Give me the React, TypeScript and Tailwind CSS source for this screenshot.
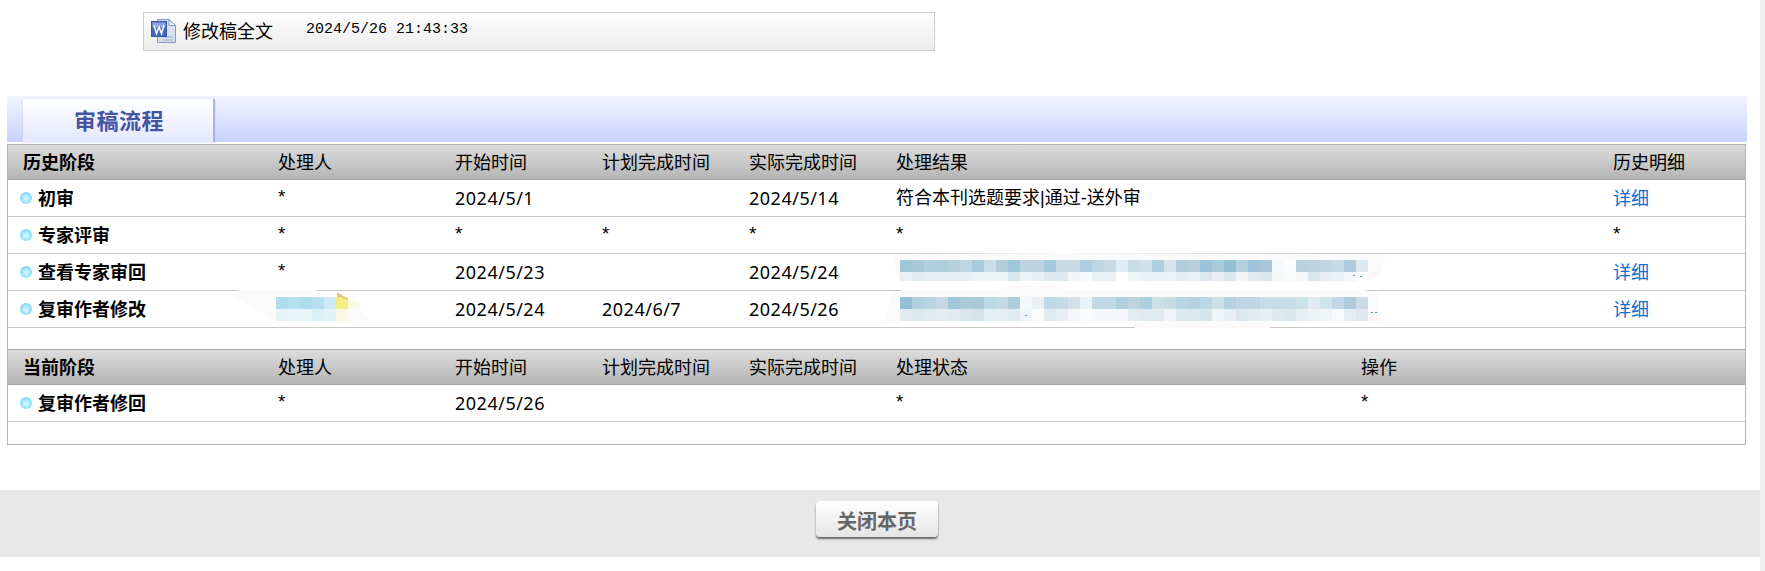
import React from "react";

const r1a = "9fc6d9 a9c9d8 b1cfe0 aecede b6d0dd bdd6e2 a9cadb c9dee8 b2cedb a0c6d9 bcd4e1 bcd4e1 a5cadd c8dbe5 c8dbe5 accee0 bed5e2 c9dae4 dfecf3 c8dde6 d0e1ea b1d0df d5e4ec b0cedc b8cfdc 9cc4d9 a8cbdb 95bfd2 b2d0e0 a0c4d9 a7c6d8 f3f9fc fafcfd b9d2df bdd4e0 bfd6e3 c5dbe5 aecbdb dfeaf0".split(" ");
const r1b = "e8f1f5 dfebf1 e4eef3 e4eef3 e6eff4 e6eff4 eef4f6 eef4f6 ecf3f6 d8e6ee ecf3f7 e8f0f4 dfeaf0 deeaf1 f1f7f9 f6fafb e9f1f5 e9f1f5 ffffff f0f6f8 e8f1f6 eaf2f6 ecf3f6 e3edf2 eaf1f5 dbe8ef e8f0f5 d9e8ee eef4f7 dfebf0 d8e7ed f3f8fa fafcfc f2f7f9 d8e6ed e6eff4 e9f1f5 f4f8f9 ffffff".split(" ");
const r2a = "95bfd6 b1d1e1 b9d4e0 c7d7e3 a1c6d9 abcbd9 a9cad9 bcdae5 c4dae3 b2cdda f2f8fb ebf0f5 bfd8e3 c5dbe5 d3e0e9 e6f3f8 c2d8e4 c2d8e4 b1d1e1 bcd4e0 accfe1 cde0e8 c8dce3 b8d5e2 b4d2e0 bcd8e4 cde0e7 b3d2de bfd7e2 bfd7e2 c8dde7 c8dde7 c8dde8 cce2ea e2eaf1 d0e4ec c0d8e5 acccdd c8dde7".split(" ");
const r2b = "e0ecf2 dceaf0 dfebf1 e6ecf3 dfebf1 d8e7ee d4e5ec e3f0f5 e6f0f4 dfecf2 eef6f9 f8fafb dfebf1 e6f0f4 f3f7fa fafcfd f5f8fa f5f8fa f5f8fa e2edf2 dfebf1 dfebf1 eff5f8 dbe8ee dbe8ee d6e5ec eff5f8 e8eff5 dbe8ef e1ecf1 e6eff4 dde9ef d8e7ee e8eff4 ecf3f6 f0f5f7 f8fafb e6eef4 dde9ef".split(" ");

function Blur({ top, bottom, variant }: { top: string[]; bottom: string[]; variant: number }) {
  const smear =
    variant === 0
      ? "M-6 -2 L0 -6 L160 -7 L420 -6 L485 -6 L485 -1 L480 14 L468 21 L440 22 L0 21 L-4 12 Z"
      : "M-12 10 L-8 -2 L4 -8 L100 -8 L120 -12 L150 -12 L160 -8 L460 -8 L478 -4 L478 24 L370 24 L370 31 L235 31 L235 24 L-14 24 Z";
  const specks =
    variant === 0
      ? [[453, 15], [460, 16]]
      : [[125, 18], [471, 15], [475, 15]];
  return (
    <svg width="480" height="24" viewBox="0 0 480 24" className="overflow-visible block">
      <path d={smear} fill="#fafafa" />
      {top.map((c, i) => (
        <rect key={"a" + i} x={i * 12} y={0} width={12} height={12} fill={"#" + c} />
      ))}
      {bottom.map((c, i) => (
        <rect key={"b" + i} x={i * 12} y={12} width={12} height={variant === 0 ? 9 : 12} fill={"#" + c} />
      ))}
      {specks.map(([x, y], i) => (
        <rect key={"s" + i} x={x} y={y} width={2} height={1} fill="#3a9fd0" />
      ))}
    </svg>
  );
}

function NameBlur() {
  const t = ["#acdcee", "#b6e0ef", "#acdcee", "#b6e0ef", "#cdeaf5"];
  const b = ["#e6f4fa", "#e8f5fa", "#e8f5fa", "#ddeff8", "#e3f2f9"];
  return (
    <svg width="84" height="24" viewBox="0 0 84 24" className="overflow-visible block">
      <path d="M-43 -1 L-38 -7 L40 -7 L48 0 L84 10 L94 24 L44 25 L44 30 L11 30 L11 25 L0 24 Z" fill="#fbfbfb" />
      {t.map((c, i) => (
        <rect key={"t" + i} x={i * 12} y={0} width={12} height={12} fill={c} />
      ))}
      {b.map((c, i) => (
        <rect key={"b" + i} x={i * 12} y={12} width={12} height={12} fill={c} />
      ))}
      <rect x={60} y={0} width={12} height={12} fill="#f0ee85" />
      <path d="M61 0 L61 -5 L72 2 L72 3 L64 0 Z" fill="#e3c77a" />
      <rect x={60} y={12} width={12} height={12} fill="#f9f8e4" />
      <path d="M72 1 L84 6 L84 12 L72 12 Z" fill="#fbfae8" />
    </svg>
  );
}

function Dot() {
  return (
    <span className="inline-block w-[12px] h-[12px] rounded-full bg-[radial-gradient(circle_at_50%_55%,#e6f9ff_0%,#9fe6fb_45%,#7dd3f5_75%,#b9ecfb_100%)] shrink-0" />
  );
}

function Stage({ name }: { name: string }) {
  return (
    <td className="border-b border-[#c8c8c8] pl-[12px]">
      <div className="flex items-center gap-[6px] font-bold">
        <Dot />
        <span className="pt-[1px]">{name}</span>
      </div>
    </td>
  );
}

function Cell({ children, colSpan }: { children?: React.ReactNode; colSpan?: number }) {
  return (
    <td colSpan={colSpan} className="border-b border-[#c8c8c8] align-middle whitespace-nowrap">
      {children}
    </td>
  );
}

function Date({ children }: { children: string }) {
  return <span className="tracking-[0.5px]">{children}</span>;
}

function Star() {
  return <span className="font-['Liberation_Sans'] text-[19px] relative top-[-1px]">*</span>;
}

function Link() {
  return <span className="text-[#0f6fd0]">详细</span>;
}

function HeaderRow({ title, cols }: { title: string; cols: [string, number?][] }) {
  return (
    <tr className="h-[35px] bg-[linear-gradient(#dcdcdc,#b4b4b4)]">
      <th className="pl-[15px] pt-[1px] text-left font-bold border-b border-[#a5a5a5]">{title}</th>
      {cols.map(([c, span], i) => (
        <td key={i} colSpan={span} className="pt-[1px] border-b border-[#a5a5a5] font-normal">
          {c}
        </td>
      ))}
    </tr>
  );
}

function WordIcon() {
  return (
    <svg width="25" height="24" viewBox="0 0 25 24" className="shrink-0">
      <path d="M6.5 0.5 H18 L24.5 6.5 V23.5 H6.5 Z" fill="#d5e0f0" stroke="#7f9cc6" strokeWidth="1" />
      <path d="M18 0.5 V6.5 H24.5 Z" fill="#f2f6fb" stroke="#7f9cc6" strokeWidth="1" />
      <path d="M12 18 H22 M12 21 H22" stroke="#a9bfdd" strokeWidth="1.5" />
      <rect x="0.5" y="2.5" width="15" height="15" fill="#4468bc" stroke="#3a56a0" />
      <rect x="1.5" y="3.5" width="13" height="5" fill="#8aa4e2" />
      <path d="M3 6 L5.5 14.5 L8 8 L10.5 14.5 L13 6" fill="none" stroke="#f4f7ff" strokeWidth="1.6" />
    </svg>
  );
}

export default function App() {
  const font = { fontFamily: '"Noto Sans", "Noto Sans CJK SC", sans-serif' };
  return (
    <div className="flex w-[1765px] h-[571px] overflow-hidden bg-white text-[18px] text-black" style={font}>
      <div className="w-[1760px] flex flex-col">
        <div className="h-[96px] pt-[12px] pl-[143px]">
          <div className="w-[792px] h-[39px] border border-[#cccccc] bg-[linear-gradient(#ffffff,#ebebeb)] flex items-center pl-[7px] pb-[2px]">
            <WordIcon />
            <span className="ml-[7px] w-[123px] mt-[2px]">修改稿全文</span>
            <span className="font-['Liberation_Mono'] text-[15px]">2024/5/26 21:43:33</span>
          </div>
        </div>

        <div className="ml-[7px] w-[1740px] h-[46px] bg-[linear-gradient(#f2f4fe,#c9d2fd)] pl-[16px] pt-[3px]">
          <div className="w-[192px] h-[43px] bg-[linear-gradient(#ffffff,#e3e8fd)] border-r-2 border-r-[#aab4e0] shadow-[0_0_2px_#c5cbe8] flex items-center justify-center pl-[2px] text-[22px] tracking-[0.5px] font-bold text-[#4553a3]">
            审稿流程
          </div>
        </div>

        <div className="mt-[2px] ml-[7px] w-[1739px] h-[301px] border border-[#b4b4b4]">
          <table className="table-fixed w-full border-separate border-spacing-0">
            <colgroup>
              <col className="w-[270px]" />
              <col className="w-[177px]" />
              <col className="w-[147px]" />
              <col className="w-[147px]" />
              <col className="w-[147px]" />
              <col className="w-[465px]" />
              <col className="w-[252px]" />
              <col />
            </colgroup>
            <tbody>
              <HeaderRow
                title="历史阶段"
                cols={[["处理人"], ["开始时间"], ["计划完成时间"], ["实际完成时间"], ["处理结果", 2], ["历史明细"]]}
              />
              <tr className="h-[37px]">
                <Stage name="初审" />
                <Cell><Star /></Cell>
                <Cell><Date>2024/5/1</Date></Cell>
                <Cell />
                <Cell><Date>2024/5/14</Date></Cell>
                <Cell colSpan={2}><span className="font-['Liberation_Sans','Noto_Sans_CJK_SC']">符合本刊选题要求|通过-送外审</span></Cell>
                <Cell><Link /></Cell>
              </tr>
              <tr className="h-[37px]">
                <Stage name="专家评审" />
                <Cell><Star /></Cell>
                <Cell><Star /></Cell>
                <Cell><Star /></Cell>
                <Cell><Star /></Cell>
                <Cell colSpan={2}><Star /></Cell>
                <Cell><Star /></Cell>
              </tr>
              <tr className="h-[37px]">
                <Stage name="查看专家审回" />
                <Cell><Star /></Cell>
                <Cell><Date>2024/5/23</Date></Cell>
                <Cell />
                <Cell><Date>2024/5/24</Date></Cell>
                <Cell colSpan={2}>
                  <div className="ml-[4px]">
                    <Blur top={r1a} bottom={r1b} variant={0} />
                  </div>
                </Cell>
                <Cell><Link /></Cell>
              </tr>
              <tr className="h-[37px]">
                <Stage name="复审作者修改" />
                <Cell>
                  <div className="-ml-[2px]">
                    <NameBlur />
                  </div>
                </Cell>
                <Cell><Date>2024/5/24</Date></Cell>
                <Cell><Date>2024/6/7</Date></Cell>
                <Cell><Date>2024/5/26</Date></Cell>
                <Cell colSpan={2}>
                  <div className="ml-[4px]">
                    <Blur top={r2a} bottom={r2b} variant={1} />
                  </div>
                </Cell>
                <Cell><Link /></Cell>
              </tr>
              <tr className="h-[22px]">
                <td colSpan={8} className="border-b border-[#a5a5a5]" />
              </tr>
              <HeaderRow
                title="当前阶段"
                cols={[["处理人"], ["开始时间"], ["计划完成时间"], ["实际完成时间"], ["处理状态"], ["操作", 2]]}
              />
              <tr className="h-[37px]">
                <Stage name="复审作者修回" />
                <Cell><Star /></Cell>
                <Cell><Date>2024/5/26</Date></Cell>
                <Cell />
                <Cell />
                <Cell><Star /></Cell>
                <Cell colSpan={2}><Star /></Cell>
              </tr>
            </tbody>
          </table>
        </div>

        <div className="mt-[45px] h-[67px] bg-[#e8e8e8] flex justify-center pt-[11px] pr-[6px]">
          <button className="w-[122px] h-[36px] pt-[5px] rounded-[4px] bg-[linear-gradient(#ffffff,#e4e4e4)] shadow-[0_2px_2px_#666666] text-[20px] font-bold text-[#666666]">
            关闭本页
          </button>
        </div>
      </div>
      <div className="w-[5px] bg-[#f0f0f0]" />
    </div>
  );
}
